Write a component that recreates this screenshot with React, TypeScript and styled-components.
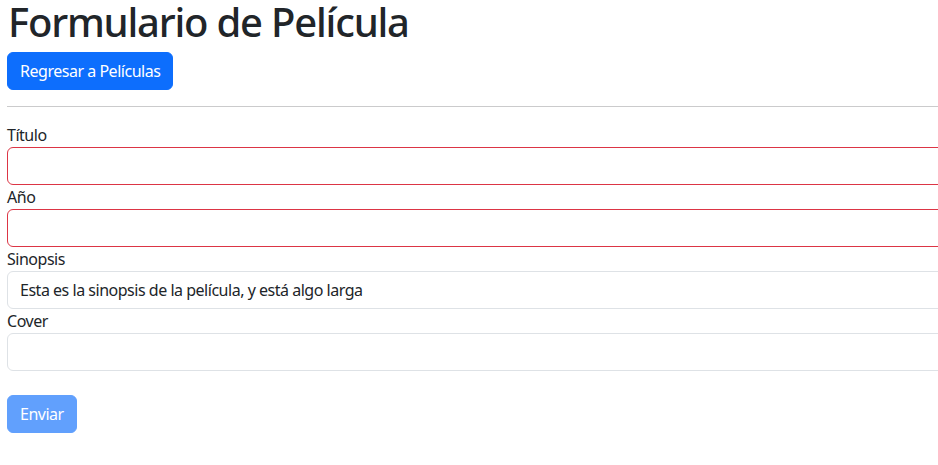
import React from "react";
import styled, { createGlobalStyle } from "styled-components";

const Global = createGlobalStyle`
  html, body { margin: 0; padding: 0; background: #fff; overflow: hidden; }
  body {
    font-family: "Noto Sans", "Liberation Sans", sans-serif;
    font-size: 16px;
    line-height: 1.5;
    letter-spacing: -0.03em;
    color: #212529;
  }
  * { box-sizing: border-box; }
`;

const Page = styled.div`
  width: 1000px;
  padding-left: 7px;
`;

const Title = styled.h1`
  margin: 0;
  width: max-content;
  height: 44px;
  font-size: 40px;
  font-weight: 500;
  line-height: 44px;
  padding-left: 1px;
  letter-spacing: -0.03em;
`;

const Button = styled.button<{ $disabled?: boolean }>`
  display: inline-block;
  height: 38px;
  padding: 6px 12px;
  font-family: inherit;
  font-size: 16px;
  line-height: 24px;
  letter-spacing: -0.03em;
  color: #fff;
  background: #0d6efd;
  border: 1px solid #0d6efd;
  border-radius: 6px;
  opacity: ${(p) => (p.$disabled ? 0.65 : 1)};
`;

const TopBar = styled.div`
  margin-top: 8px;
`;

const Rule = styled.hr`
  margin: 16px 0;
  border: 0;
  border-top: 1px solid #cbcbcc;
`;

const Form = styled.form`
  display: flex;
  flex-direction: column;
`;

const Label = styled.label`
  display: block;
  height: 24px;
  line-height: 24px;
`;

const Input = styled.input<{ $invalid?: boolean }>`
  display: block;
  width: 100%;
  height: 38px;
  padding: 6px 12px;
  font-family: inherit;
  font-size: 16px;
  line-height: 24px;
  letter-spacing: -0.03em;
  color: #212529;
  background: #fff;
  border: 1px solid ${(p) => (p.$invalid ? "#dc3545" : "#dee2e6")};
  border-radius: 6px;
  outline: none;
`;

const Actions = styled.div`
  margin-top: 24px;
`;

export default function App() {
  return (
    <>
      <Global />
      <Page>
        <Title>Formulario de Película</Title>
        <TopBar>
          <Button type="button">Regresar a Películas</Button>
        </TopBar>
        <Rule />
        <Form onSubmit={(e) => e.preventDefault()}>
          <Label>Título</Label>
          <Input $invalid defaultValue="" />
          <Label>Año</Label>
          <Input $invalid defaultValue="" />
          <Label>Sinopsis</Label>
          <Input defaultValue="Esta es la sinopsis de la película, y está algo larga" />
          <Label>Cover</Label>
          <Input defaultValue="" />
          <Actions>
            <Button type="submit" $disabled disabled>
              Enviar
            </Button>
          </Actions>
        </Form>
      </Page>
    </>
  );
}
